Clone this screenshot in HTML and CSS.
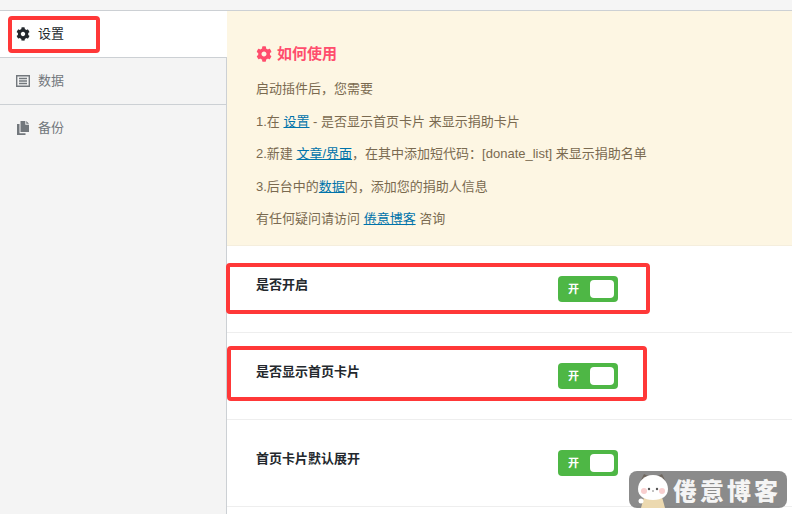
FILE: index.html
```html
<!DOCTYPE html>
<html lang="zh">
<head>
<meta charset="utf-8">
<title>设置</title>
<link rel="stylesheet" href="styles.css">
</head>
<body>
<div class="topbar"></div>
<div class="panel">
  <nav class="side">
    <div class="tab active">
      <svg class="ico" viewBox="0 0 512 512"><path fill="#23282d" d="M487 316l-42-25c4-23 4-47 0-70l42-25c5-3 7-8 5-14-11-35-30-67-54-93-4-4-10-5-15-2l-42 25c-18-15-38-27-60-35V28c0-6-4-10-9-11-36-8-73-8-107 0-5 1-9 5-9 11v49c-22 8-42 20-60 35L94 87c-5-3-11-2-15 2-24 26-43 58-54 93-2 6 0 11 5 14l42 25c-4 23-4 47 0 70l-42 25c-5 3-7 8-5 14 11 35 30 67 54 93 4 4 10 5 15 2l42-25c18 15 38 27 60 35v49c0 6 4 10 9 11 36 8 73 8 107 0 5-1 9-5 9-11v-49c22-8 42-20 60-35l42 25c5 3 11 2 15-2 24-26 43-58 54-93 2-6 0-11-5-14zM256 336c-44 0-80-36-80-80s36-80 80-80 80 36 80 80-36 80-80 80z"/></svg>
      <span>设置</span>
    </div>
    <div class="tab">
      <svg class="ico" viewBox="0 0 14 14"><path fill="none" stroke="#72777c" stroke-width="1.4" d="M.7 1.700h12.600v10.600H.7zM3 4.500h8M3 7h8M3 9.500h8"/></svg>
      <span>数据</span>
    </div>
    <div class="tab">
      <svg class="ico" viewBox="0 0 14 14"><path fill="#72777c" d="M4.500 0h4.800v3.700H13V11H4.500zM10.300 0L13 2.700h-2.700zM1 3h2.500v9.200h6V14H1z"/></svg>
      <span>备份</span>
    </div>
  </nav>
  <main class="content">
    <section class="notice">
      <h2 class="notice-title">
        <svg class="title-ico" viewBox="0 0 512 512"><path fill="#ff4d6d" d="M487 316l-42-25c4-23 4-47 0-70l42-25c5-3 7-8 5-14-11-35-30-67-54-93-4-4-10-5-15-2l-42 25c-18-15-38-27-60-35V28c0-6-4-10-9-11-36-8-73-8-107 0-5 1-9 5-9 11v49c-22 8-42 20-60 35L94 87c-5-3-11-2-15 2-24 26-43 58-54 93-2 6 0 11 5 14l42 25c-4 23-4 47 0 70l-42 25c-5 3-7 8-5 14 11 35 30 67 54 93 4 4 10 5 15 2l42-25c18 15 38 27 60 35v49c0 6 4 10 9 11 36 8 73 8 107 0 5-1 9-5 9-11v-49c22-8 42-20 60-35l42 25c5 3 11 2 15-2 24-26 43-58 54-93 2-6 0-11-5-14zM256 336c-44 0-80-36-80-80s36-80 80-80 80 36 80 80-36 80-80 80z"/></svg>
        如何使用
      </h2>
      <p>启动插件后，您需要</p>
      <p>1.在 <a href="#">设置</a> - 是否显示首页卡片 来显示捐助卡片</p>
      <p>2.新建 <a href="#">文章/界面</a>，在其中添加短代码：[donate_list] 来显示捐助名单</p>
      <p>3.后台中的<a href="#">数据</a>内，添加您的捐助人信息</p>
      <p>有任何疑问请访问 <a href="#">倦意博客</a> 咨询</p>
    </section>
    <div class="row"><h4 class="label">是否开启</h4><div class="switch"><b>开</b><i class="knob"></i></div></div>
    <div class="row"><h4 class="label">是否显示首页卡片</h4><div class="switch"><b>开</b><i class="knob"></i></div></div>
    <div class="row"><h4 class="label">首页卡片默认展开</h4><div class="switch"><b>开</b><i class="knob"></i></div></div>
  </main>
</div>
<div class="mark mark-tab"></div>
<div class="mark mark-row1"></div>
<div class="mark mark-row2"></div>
<div class="wm">
  <svg class="wm-face" viewBox="0 0 32 37">
    <path fill="#6f675f" d="M4 9l3-6 6 3zM28 9l-3-6-6 3z"/>
    <path fill="#ecd9b0" d="M7 26h18l3 11H4z"/>
    <path fill="#fff" d="M16 4c9 0 15 7 15 14s-6 11-15 11S1 25 1 18 7 4 16 4z"/>
    <circle cx="7" cy="20" r="3" fill="#f8cfcf"/><circle cx="25" cy="20" r="3" fill="#f8cfcf"/>
    <circle cx="12" cy="18" r="1.200" fill="#555"/><circle cx="20" cy="18" r="1.200" fill="#555"/>
    <circle cx="16" cy="20" r=".8" fill="#777"/>
    <circle cx="4" cy="30" r="2.500" fill="#fff"/>
  </svg>
  <span>倦意博客</span>
</div>
</body>
</html>
```
FILE: styles.css
```css
* { box-sizing: border-box; }
html, body { margin: 0; height: 514px; overflow: hidden; }
body {
  position: relative;
  background: #fff;
  font-family: "Liberation Sans", "Noto Sans CJK SC", sans-serif;
  font-size: 13px;
  line-height: 1.5;
  color: #444;
}
.topbar { height: 11px; background: #f5f5f5; border-bottom: 1px solid #ccd0d4; }
.panel { display: flex; height: 503px; }
.side { width: 227px; flex: none; background: #f4f4f4; border-right: 1px solid #ccd0d4; }
.tab {
  display: flex; align-items: center; gap: 8px;
  height: 47px; padding: 0 0 1px 16px;
  border-bottom: 1px solid #ccd0d4;
  color: #72777c;
}
.tab.active { height: 47px; background: #fff; color: #23282d; margin-right: -1px; position: relative; }
.tab:last-child { border-bottom: 0; }
.ico { width: 14px; height: 14px; flex: none; }
.content { flex: 1; min-width: 0; }
.notice {
  height: 235px; padding: 31px 29px 0;
  background: #fdf6e3;
  border-bottom: 1px solid #f5eedd;
  color: #7a6a50;
}
.notice-title {
  display: flex; align-items: center; gap: 5px;
  margin: 0 0 13px; height: 24px;
  font-size: 15px; line-height: 24px; font-weight: 700;
  color: #ff4d6d;
}
.title-ico { width: 16px; height: 16px; }
.notice p { margin: 0 0 13px; }
.notice a { color: #0073aa; text-decoration: underline; }
.row {
  display: flex; align-items: flex-start; justify-content: space-between;
  height: 87px; padding: 29px 174px 0 29px;
  border-bottom: 1px solid #eee;
}
.label { margin: 0; font-size: 13px; line-height: 20px; font-weight: 700; color: #23282d; }
.switch {
  position: relative; width: 60px; height: 26px; margin-top: 1px;
  background: #4eb745; border-radius: 4px;
  color: #fff; font-size: 11px; line-height: 26px;
  padding-left: 10px;
}
.switch b { font-weight: 700; }
.knob {
  position: absolute; right: 4px; top: 4px;
  width: 24px; height: 18px; background: #fff; border-radius: 4px;
}
.mark { position: absolute; border: 4px solid #ff3838; border-radius: 4px; }
.mark-tab { left: 8px; top: 16px; width: 92px; height: 37px; }
.mark-row1 { left: 226px; top: 263px; width: 424px; height: 51px; }
.mark-row2 { left: 227px; top: 346px; width: 420px; height: 55px; }
.wm {
  position: absolute; left: 629px; top: 471px; width: 158px; height: 37px;
  display: flex; align-items: center; gap: 4px; padding-left: 8px;
  background: rgba(100, 100, 100, .75); border-radius: 8px;
  color: rgba(255, 255, 255, .92); font-size: 24px; font-weight: 900; line-height: 37px;
  overflow: hidden;
}
.wm-face { width: 32px; height: 37px; flex: none; }
.wm span { font-family: "Noto Sans CJK SC", sans-serif; letter-spacing: 3px; white-space: nowrap; }
```
